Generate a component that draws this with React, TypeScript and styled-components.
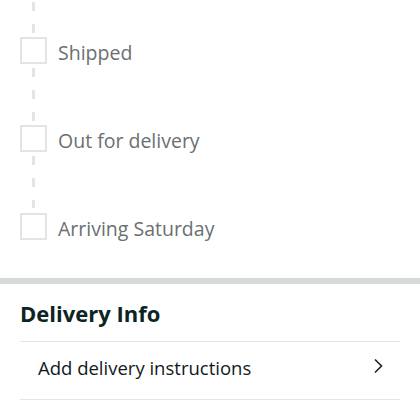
import React from "react";
import styled, { createGlobalStyle } from "styled-components";

const GlobalStyle = createGlobalStyle`
  html, body {
    margin: 0;
    padding: 0;
    background: #ffffff;
    font-family: "Open Sans", "Noto Sans", Arial, sans-serif;
  }
  * { box-sizing: border-box; }
`;

const Page = styled.div`
  width: 420px;
  background: #ffffff;
`;

const Timeline = styled.div`
  position: relative;
  display: flex;
  flex-direction: column;
  gap: 61px;
  padding: 37px 20px 38px 20px;

  &::before {
    content: "";
    position: absolute;
    left: 32px;
    width: 3px;
    top: 2px;
    bottom: 70px;
    background: repeating-linear-gradient(
      to bottom,
      #e4e4e4 0px,
      #e4e4e4 9px,
      transparent 9px,
      transparent 22px
    );
  }
`;

const Step = styled.div`
  position: relative;
  display: flex;
  align-items: center;
  gap: 11px;
  height: 27px;
`;

const Box = styled.div`
  width: 27px;
  height: 27px;
  border: 2px solid #e4e4e4;
  background: #ffffff;
  flex-shrink: 0;
`;

const StepLabel = styled.span`
  font-size: 19.5px;
  line-height: 27px;
  color: #6b6f6f;
  padding-top: 3px;
`;

const Band = styled.div`
  height: 6px;
  background: #d5d9d9;
`;

const Section = styled.section`
  padding: 14px 20px 0 20px;
`;

const Title = styled.h2`
  margin: 0 0 13px 0;
  font-size: 22px;
  line-height: 30px;
  font-weight: 700;
  color: #0c2424;
`;

const Row = styled.div`
  display: flex;
  align-items: center;
  justify-content: space-between;
  border-top: 1px solid #e3e6e6;
  border-bottom: 1px solid #e3e6e6;
  padding: 14px 17px 19px 18px;
`;

const RowLabel = styled.span`
  font-size: 18.5px;
  line-height: 24px;
  color: #0f1a1a;
`;

const Chevron = styled.svg`
  width: 10px;
  height: 16px;
  margin-top: -4px;
`;

export default function App() {
  const steps = ["Shipped", "Out for delivery", "Arriving Saturday"];
  return (
    <Page>
      <GlobalStyle />
      <Timeline>
        {steps.map((s) => (
          <Step key={s}>
            <Box />
            <StepLabel>{s}</StepLabel>
          </Step>
        ))}
      </Timeline>
      <Band />
      <Section>
        <Title>Delivery Info</Title>
        <Row>
          <RowLabel>Add delivery instructions</RowLabel>
          <Chevron viewBox="0 0 10 16">
            <path d="M2 1.5 L8.5 8 L2 14.5" fill="none" stroke="#1a2323" strokeWidth="1.6" />
          </Chevron>
        </Row>
      </Section>
    </Page>
  );
}
